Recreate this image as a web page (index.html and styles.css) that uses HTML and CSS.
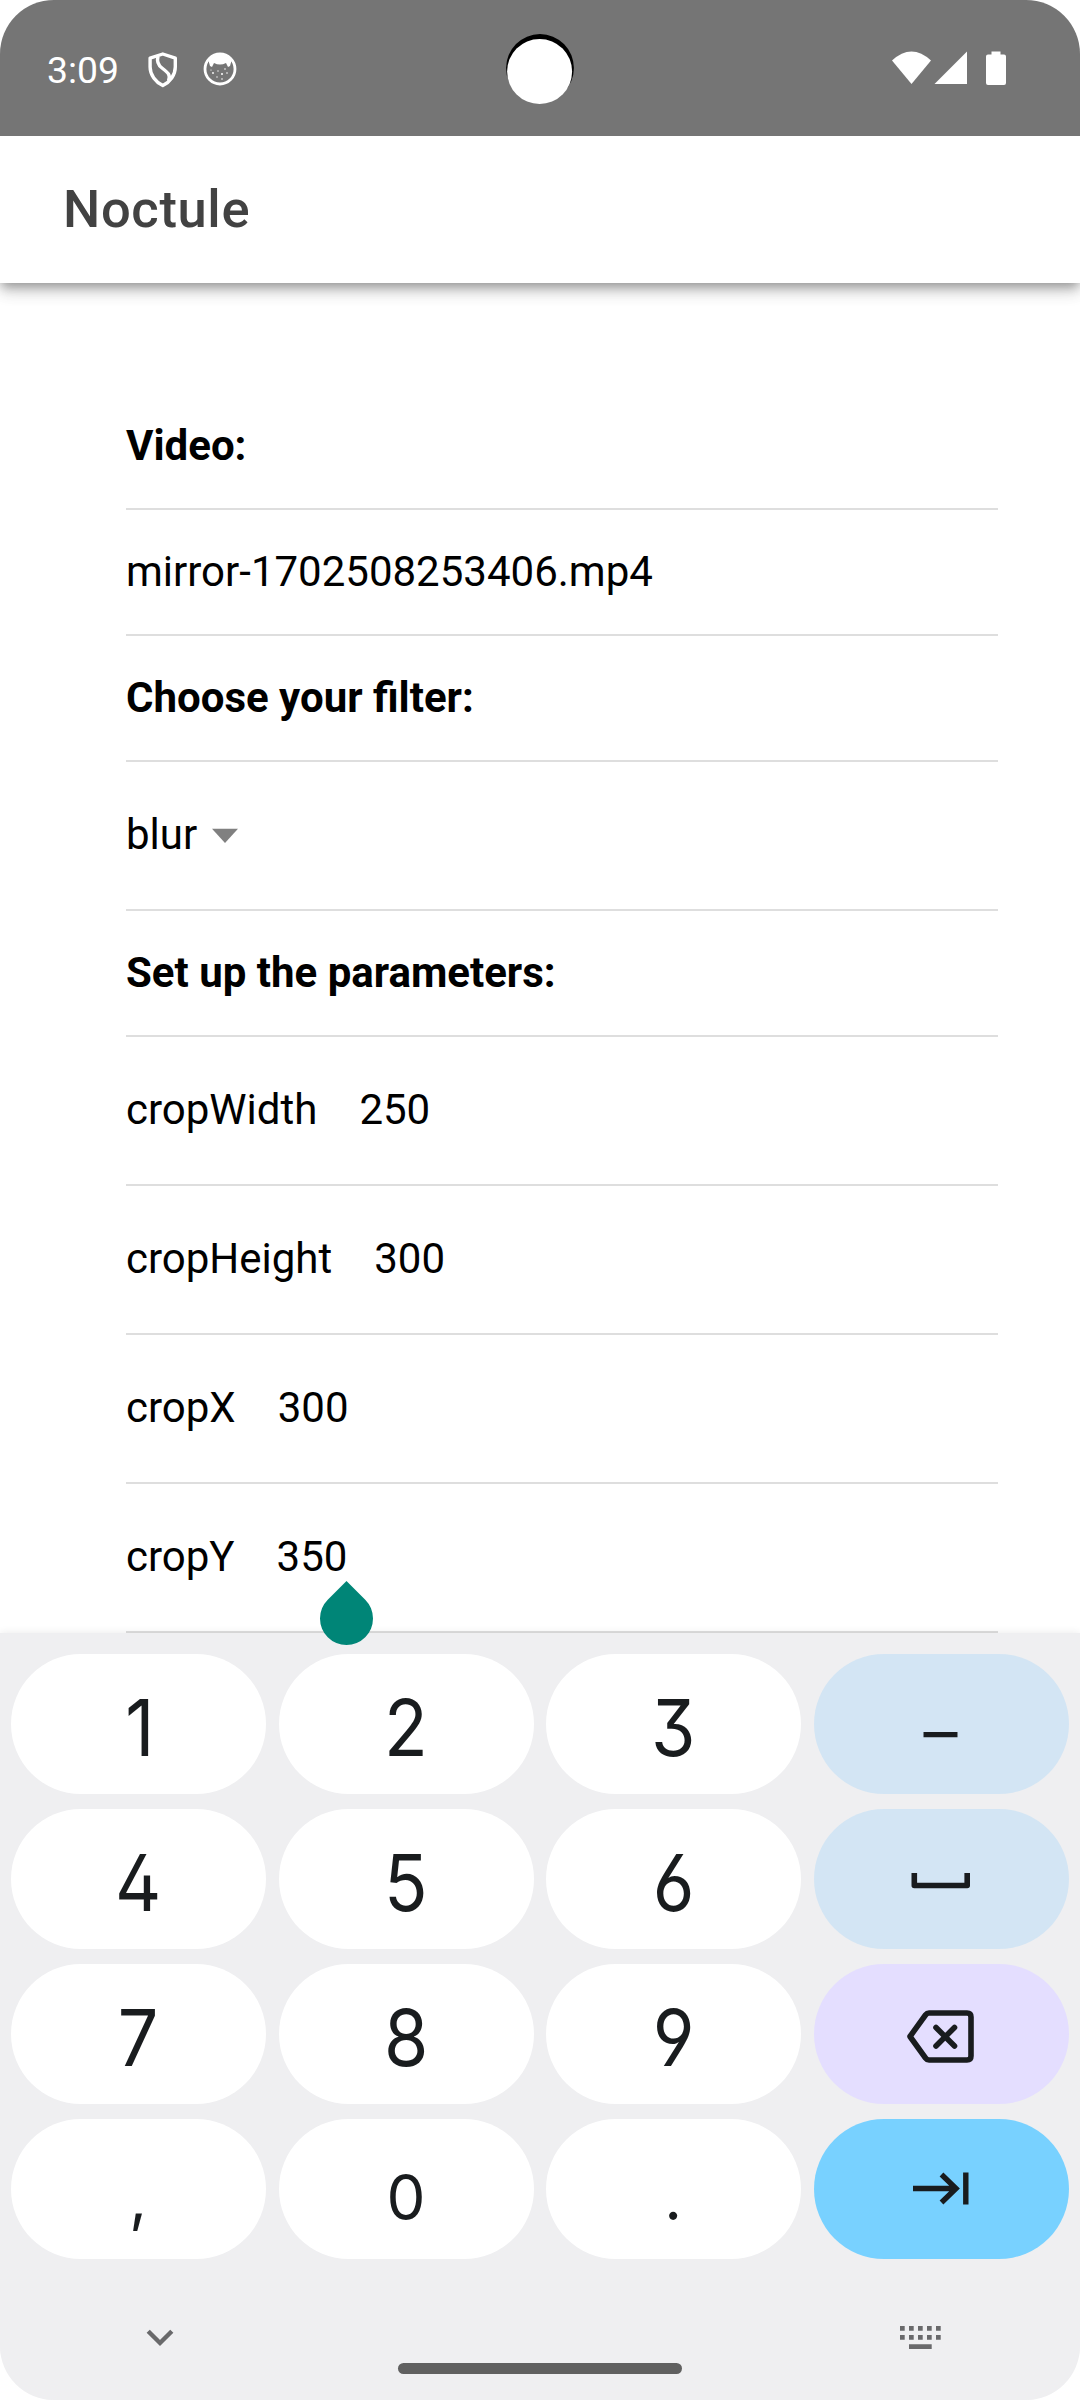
FILE: index.html
```html
<!DOCTYPE html>
<html lang="en">
<head>
<meta charset="utf-8">
<title>Noctule</title>
<link rel="stylesheet" href="styles.css">
</head>
<body>
<div class="screen">
  <header class="status">
    <span class="clock">3:09</span>
    <svg class="shield" width="30" height="36" viewBox="0 0 30 36" fill="none" stroke="#fff" stroke-width="3.4" stroke-linejoin="round"><path d="M14.8 2L27.3 6.200V15C27.3 23 22 30 14.8 33.600C7.600 30 2.100 23 2.100 15V6.200Z"/><path d="M10 4.500C8.500 10 10 13 14 16C20 20.500 23 23 20.500 29"/></svg>
    <svg class="face" width="34" height="34" viewBox="0 0 34 34"><circle cx="17" cy="17" r="15" fill="none" stroke="#fff" stroke-width="2.8"/><path d="M5 7Q17 -3 29 7L27 14L25 15L23 11Q17 14 11 11L9 15L7 14Z" fill="#fff"/><g fill="#fff"><circle cx="10" cy="21" r=".9"/><circle cx="15" cy="19" r=".7"/><circle cx="19" cy="22" r="1"/><circle cx="24" cy="21" r=".8"/><circle cx="14" cy="25" r=".7"/><circle cx="19" cy="27" r=".8"/><circle cx="22" cy="17" r=".8"/><circle cx="8" cy="18" r=".6"/></g></svg>
    <svg class="signals" width="116" height="36" viewBox="0 0 116 36" fill="#fff"><path d="M0 9.500Q19.500 -8.500 39 9.500L19.500 33Z"/><path d="M42.500 33L75 .5V33Z"/><path d="M99.500 .5h9v3h3.500q2 0 2 2v26.500q0 2-2 2h-16q-2 0-2-2V5.500q0-2 2-2h3.500z"/></svg>
    <svg class="camera" width="68" height="72" viewBox="0 0 68 72"><circle cx="34" cy="34" r="33.900"/><circle cx="33.600" cy="37.500" r="32.500" fill="#fff"/></svg>
  </header>
  <div class="appbar"><h1>Noctule</h1></div>
  <main class="form">
    <div class="row strong">Video:</div>
    <div class="row">mirror-1702508253406.mp4</div>
    <div class="row strong">Choose your filter:</div>
    <div class="row tall">blur<svg class="caret" width="28" height="16" viewBox="0 0 28 16"><path d="M1 .8H27L14 15Z" fill="#808080"/></svg></div>
    <div class="row strong">Set up the parameters:</div>
    <div class="row tall param"><span>cropWidth</span><span>250</span></div>
    <div class="row tall param"><span>cropHeight</span><span>300</span></div>
    <div class="row tall param"><span>cropX</span><span>300</span></div>
    <div class="row tall param"><span>cropY</span><span class="field">350<i class="handle"></i></span></div>
  </main>
  <section class="keyboard">
    <div class="keys">
      <div class="key one"><span>1</span></div><div class="key"><span>2</span></div><div class="key"><span>3</span></div><div class="key blue dash"><span>–</span></div>
      <div class="key"><span>4</span></div><div class="key"><span>5</span></div><div class="key"><span>6</span></div>
      <div class="key blue icon"><svg width="60" height="140" viewBox="0 0 60 140" fill="none" stroke="#191c1e" stroke-width="5.600" stroke-linejoin="round"><path d="M3.300 64V76.500H56.200V64"/></svg></div>
      <div class="key"><span>7</span></div><div class="key"><span>8</span></div><div class="key"><span>9</span></div>
      <div class="key violet icon"><svg width="68" height="140" viewBox="0 0 68 140" fill="none" stroke="#191c1e" stroke-width="5.600" stroke-linejoin="round" stroke-linecap="round"><path d="M22 49H60Q64 49 64 53V92Q64 96 60 96H22Q20 96 18.500 94L3 72.500L18.500 51Q20 49 22 49Z"/><path d="M29 63.500L47.500 82M47.500 63.500L29 82"/></svg></div>
      <div class="key small"><span>,</span></div><div class="key small"><span>0</span></div><div class="key small"><span>.</span></div>
      <div class="key cyan icon"><svg width="56" height="140" viewBox="0 0 56 140" fill="none" stroke="#191c1e" stroke-width="5.400"><path d="M0 69.500H44M28.500 55.500L43 69.500L28.500 83.500M52.800 53.500V85.500"/></svg></div>
    </div>
    <footer class="nav">
      <svg class="down" width="28" height="18" viewBox="0 0 28 18" fill="none" stroke="#69696b" stroke-width="4.400"><path d="M2.200 2.200L14 14L25.800 2.200"/></svg>
      <span class="home"></span>
      <svg class="switch" width="42" height="24" viewBox="0 0 42 24" fill="#69696b"><path d="M0 0h4.700v4.700H0zM9 0h4.700v4.700H9zM18 0h4.700v4.700H18zM27 0h4.700v4.700H27zM36 0h4.700v4.700H36zM0 9h4.700v4.700H0zM9 9h4.700v4.700H9zM18 9h4.700v4.700H18zM27 9h4.700v4.700H27zM36 9h4.700v4.700H36zM9 18.300h22.700v4.700H9z"/></svg>
    </footer>
  </section>
</div>
</body>
</html>
```
FILE: styles.css
```css
* { box-sizing: border-box; }
body { margin: 0; background: #fff; font-family: Roboto, sans-serif; color: #000; }
.screen { display: flex; flex-direction: column; width: 1080px; height: 2400px; overflow: hidden; border-radius: 54px; background: #fff; }
.status { position: relative; z-index: 1; display: flex; align-items: flex-start; flex: none; height: 136px; padding: 51px 73px 0 47px; background: #757575; }
.clock { width: 101px; margin-top: -3px; font-size: 37.3px; line-height: 44px; color: #fff; }
.shield { margin-top: 1px; }
.face { margin: 1px 0 0 25px; }
.signals { margin-left: auto; margin-right: -1px; }
.camera { position: absolute; left: 506px; top: 34px; }
.appbar { position: relative; display: flex; align-items: center; flex: none; height: 147px; padding: 0 0 2px 63px; background: #fff; box-shadow: 0 5px 10px -2px rgba(0,0,0,.3), 0 10px 14px rgba(0,0,0,.12), 0 2px 22px rgba(0,0,0,.1); }
h1 { margin: 0; font-size: 52.5px; font-weight: 500; letter-spacing: .65px; line-height: 62px; color: #424242; }
.form { flex: none; height: 1350px; padding: 101px 82px 0 126px; }
.row { display: flex; align-items: center; height: 126px; padding-bottom: 2px; border-bottom: 2px solid #dedede; font-size: 42px; line-height: 49px; }
.tall { height: 149px; }
.strong { font-weight: 700; }
.caret { margin: 2px 0 0 14px; }
.param { gap: 42px; }
.field { position: relative; }
.handle { position: absolute; z-index: 2; right: -26px; top: 60px; width: 53px; height: 53px; border-radius: 0 50% 50% 50%; transform: rotate(45deg); background: #008577; }
.keyboard { flex: 1; padding: 21px 11px 0; background: #efeff1; box-shadow: 0 0 8px rgba(0,0,0,.09); }
.keys { display: grid; grid-template-columns: repeat(4, 255px); justify-content: space-between; grid-auto-rows: 140px; row-gap: 15px; }
.key { display: flex; align-items: center; justify-content: center; padding: 7px 1px 0 0; border-radius: 70px; background: #fff; font-family: Inter, sans-serif; font-size: 78px; line-height: 1; color: #191c1e; font-feature-settings: "ss01"; }
.key span { transform: scaleX(.92); }
.one { padding-left: 4px; }
.small { padding-top: 17px; font-size: 63px; }
.small span { transform: scaleX(.98); }
.blue { background: #d3e5f4; }
.violet { background: #e4deff; }
.cyan { background: #78d1ff; }
.icon { padding: 0; }
.dash { padding-top: 13px; font-size: 66px; }
.dash span { transform: scaleX(1.03); }
.nav { display: flex; align-items: flex-start; padding: 67px 127px 0 135px; }
.down { margin-top: 3px; }
.home { width: 284px; height: 11px; margin: 37px auto 0 224px; border-radius: 5.5px; background: #606060; }
```
